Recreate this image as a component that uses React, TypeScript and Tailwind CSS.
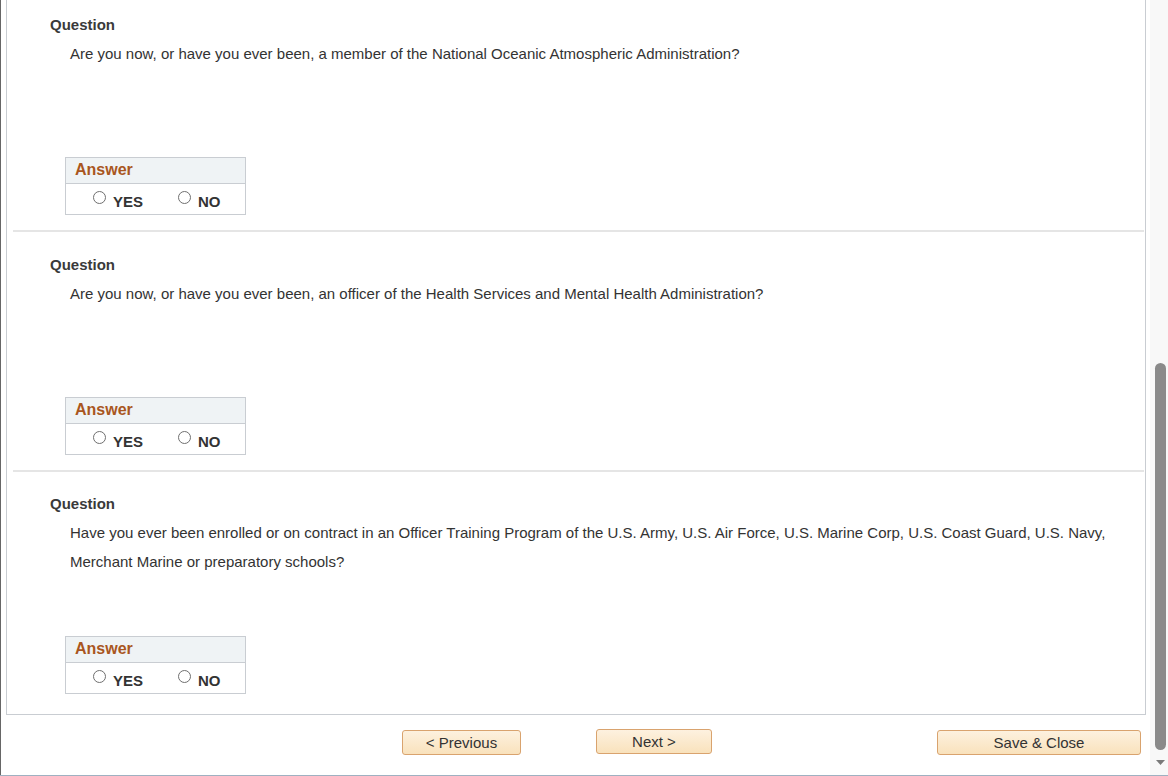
import React from "react";

const font = { fontFamily: '"Liberation Sans", Arial, sans-serif' };

function Radio({ label }: { label: string }) {
  return (
    <div className="flex items-start">
      <span className="mt-[7px] block h-[13px] w-[13px] rounded-full border border-[#6f6f6f] bg-white" />
      <span className="ml-[7px] mt-[10px] text-[15px] font-bold leading-[15px] text-[#333]">{label}</span>
    </div>
  );
}

function AnswerTable() {
  return (
    <div className="ml-[58px] w-[181px] border border-[#c9cdd2]">
      <div className="h-[26px] border-b border-[#c9cdd2] bg-[#eff3f5] pl-[9px] text-[16px] font-bold leading-[23px] text-[#a9561e]">
        Answer
      </div>
      <div className="flex h-[30px] pl-[27px]">
        <Radio label="YES" />
        <div className="ml-[35px]">
          <Radio label="NO" />
        </div>
      </div>
    </div>
  );
}

function Section({ text, pt, mb, last }: { text: string; pt: string; mb: string; last?: boolean }) {
  return (
    <div className={pt}>
      <div className="pl-[43px] text-[15px] font-bold leading-[18px] text-[#3a3a3a]">Question</div>
      <div className="mt-[5px] h-[118px] w-[1130px] pl-[63px] text-[15px] leading-[29px] text-[#333]">{text}</div>
      <AnswerTable />
      <div className={mb} />
      {!last && <div className="ml-[6px] mr-[1px] h-[2px] bg-[#e5e5e5]" />}
    </div>
  );
}

function Btn({ children, cls }: { children: React.ReactNode; cls: string }) {
  return (
    <div
      className={`flex h-[25px] items-center justify-center rounded-[3px] border border-[#d9a36e] bg-gradient-to-b from-[#fdf1df] to-[#f9e2bc] pt-[1px] text-[15px] text-[#333] ${cls}`}
    >
      {children}
    </div>
  );
}

export default function App() {
  return (
    <div style={font} className="h-[776px] w-[1168px] overflow-hidden border-b border-[#9fb1c1] bg-white">
      <div className="flex h-[775px]">
        <div className="w-[1150px] border-l border-[#666]">
          <div className="ml-[5px] w-[1140px] border-x border-b border-[#c9cdd2]">
            <Section
              pt="pt-[16px]"
              mb="h-[15px]"
              text="Are you now, or have you ever been, a member of the National Oceanic Atmospheric Administration?"
            />
            <Section
              pt="pt-[24px]"
              mb="h-[15px]"
              text="Are you now, or have you ever been, an officer of the Health Services and Mental Health Administration?"
            />
            <Section
              pt="pt-[23px]"
              mb="h-[20px]"
              last
              text="Have you ever been enrolled or on contract in an Officer Training Program of the U.S. Army, U.S. Air Force, U.S. Marine Corp, U.S. Coast Guard, U.S. Navy, Merchant Marine or preparatory schools?"
            />
          </div>
          <div className="flex items-start pt-[15px]">
            <Btn cls="ml-[401px] w-[119px]">&lt; Previous</Btn>
            <Btn cls="ml-[75px] -mt-[1px] w-[116px]">Next &gt;</Btn>
            <Btn cls="ml-[225px] w-[204px]">Save &amp; Close</Btn>
          </div>
        </div>
        <div className="flex w-[18px] flex-col bg-[#f8f8f8] pt-[363px]">
          <div className="ml-[5px] h-[387px] w-[11px] rounded-full bg-[#8a8a8a]" />
          <svg className="ml-[6px] mt-[10px]" width="9" height="5" viewBox="0 0 9 5">
            <polygon points="0,0 9,0 4.5,5" fill="#7a7a7a" />
          </svg>
        </div>
      </div>
    </div>
  );
}
